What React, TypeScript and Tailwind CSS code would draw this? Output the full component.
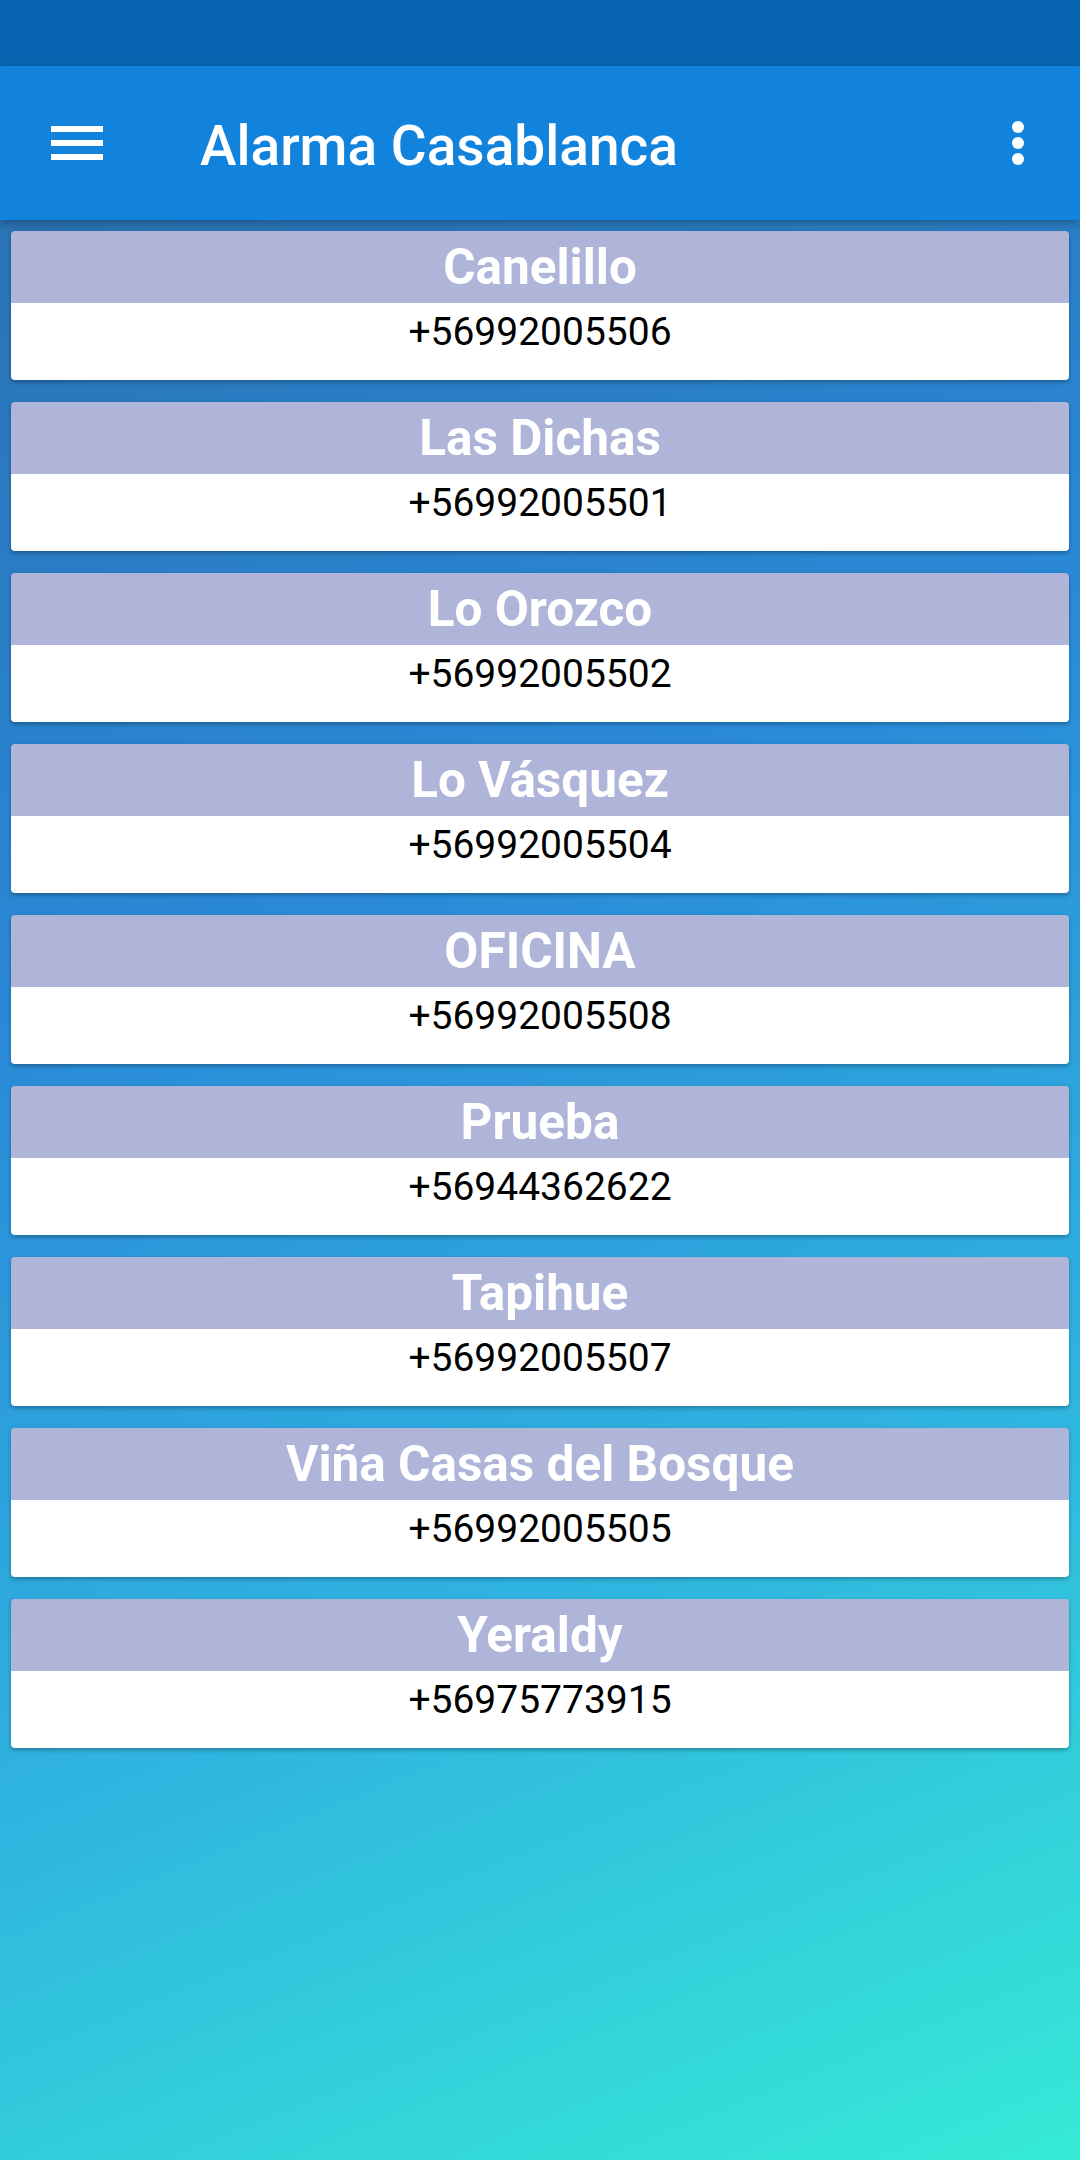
const contacts = [
  { name: 'Canelillo', phone: '+56992005506' },
  { name: 'Las Dichas', phone: '+56992005501' },
  { name: 'Lo Orozco', phone: '+56992005502' },
  { name: 'Lo Vásquez', phone: '+56992005504' },
  { name: 'OFICINA', phone: '+56992005508' },
  { name: 'Prueba', phone: '+56944362622' },
  { name: 'Tapihue', phone: '+56992005507' },
  { name: 'Viña Casas del Bosque', phone: '+56992005505' },
  { name: 'Yeraldy', phone: '+56975773915' },
];

function ContactCard({ name, phone }: { name: string; phone: string }) {
  return (
    <div className="rounded-[4px] overflow-hidden shadow-[0_2px_4px_rgba(0,0,0,0.3)]">
      <div className="h-[72px] bg-[#aeb5d9] flex items-center justify-center text-white font-bold text-[49.5px]">
        {name}
      </div>
      <div className="h-[77px] bg-white pt-[7px] text-center text-black text-[39px] leading-[1.17]">
        {phone}
      </div>
    </div>
  );
}

export default function App() {
  return (
    <div className="w-[1080px] min-h-[2160px] flex flex-col font-['Roboto',sans-serif] bg-[linear-gradient(158deg,#2a6dac_0%,#2a8ad8_40%,#2fb4e0_70%,#36ead6_100%)]">
      <div className="h-[66px] bg-[#0664b0]" />
      <div className="h-[154px] bg-[#1283dd] flex items-center shadow-[0_4px_8px_rgba(0,0,0,0.25)] relative z-10">
        <div className="w-[200px] pl-[51px]">
          <svg width="52" height="36" viewBox="0 0 52 36">
            <rect x="0" y="1" width="52" height="6" fill="white" />
            <rect x="0" y="15" width="52" height="6" fill="white" />
            <rect x="0" y="29" width="52" height="6" fill="white" />
          </svg>
        </div>
        <h1 className="flex-1 text-white font-medium text-[55px] leading-none pt-[6px]">Alarma Casablanca</h1>
        <div className="w-[60px] mr-[32px] flex justify-center">
          <svg width="14" height="46" viewBox="0 0 14 46">
            <circle cx="7" cy="7" r="6" fill="white" />
            <circle cx="7" cy="23" r="6" fill="white" />
            <circle cx="7" cy="39" r="6" fill="white" />
          </svg>
        </div>
      </div>
      <div className="flex flex-col gap-[22px] px-[11px] pt-[11px]">
        {contacts.map(c => (
          <ContactCard key={c.name} name={c.name} phone={c.phone} />
        ))}
      </div>
    </div>
  );
}
